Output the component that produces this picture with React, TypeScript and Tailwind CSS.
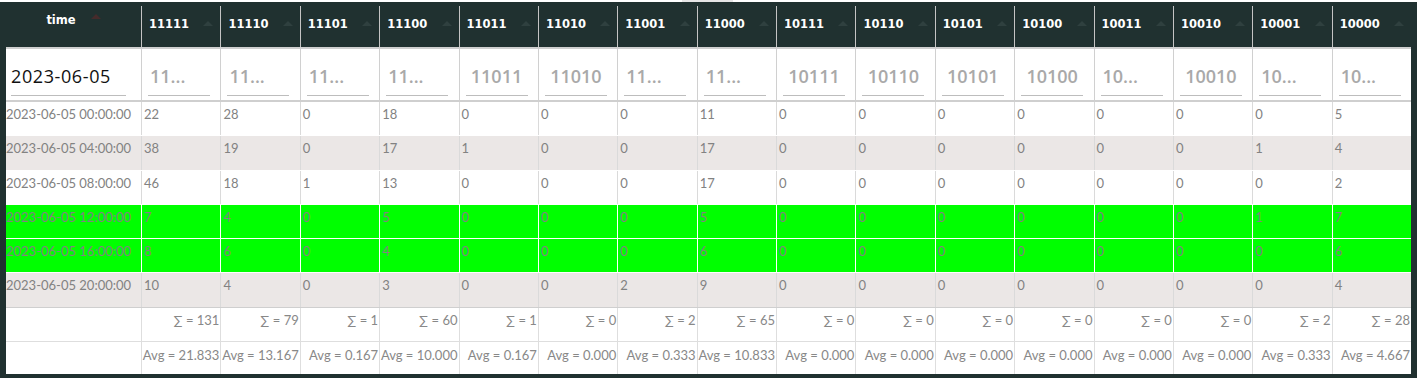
import React from 'react';

type Col = {
    name: string;
    placeholder: string;
    full: boolean;
    values: number[];
};

const cols: Col[] = [
    { name: '11111', placeholder: '11...', full: false, values: [22, 38, 46, 7, 8, 10] },
    { name: '11110', placeholder: '11...', full: false, values: [28, 19, 18, 4, 6, 4] },
    { name: '11101', placeholder: '11...', full: false, values: [0, 0, 1, 0, 0, 0] },
    { name: '11100', placeholder: '11...', full: false, values: [18, 17, 13, 5, 4, 3] },
    { name: '11011', placeholder: '11011', full: true, values: [0, 1, 0, 0, 0, 0] },
    { name: '11010', placeholder: '11010', full: true, values: [0, 0, 0, 0, 0, 0] },
    { name: '11001', placeholder: '11...', full: false, values: [0, 0, 0, 0, 0, 2] },
    { name: '11000', placeholder: '11...', full: false, values: [11, 17, 17, 5, 6, 9] },
    { name: '10111', placeholder: '10111', full: true, values: [0, 0, 0, 0, 0, 0] },
    { name: '10110', placeholder: '10110', full: true, values: [0, 0, 0, 0, 0, 0] },
    { name: '10101', placeholder: '10101', full: true, values: [0, 0, 0, 0, 0, 0] },
    { name: '10100', placeholder: '10100', full: true, values: [0, 0, 0, 0, 0, 0] },
    { name: '10011', placeholder: '10...', full: false, values: [0, 0, 0, 0, 0, 0] },
    { name: '10010', placeholder: '10010', full: true, values: [0, 0, 0, 0, 0, 0] },
    { name: '10001', placeholder: '10...', full: false, values: [0, 1, 0, 1, 0, 0] },
    { name: '10000', placeholder: '10...', full: false, values: [5, 4, 2, 7, 6, 4] },
];

const times = ['00:00:00', '04:00:00', '08:00:00', '12:00:00', '16:00:00', '20:00:00'];

// row styling: bg, border colour, height
const rowStyles = [
    { bg: 'bg-white', line: 'border-[#dadada]', h: 'h-[34px]', bottom: 'border-white' },
    { bg: 'bg-[#ebe7e6]', line: 'border-[#dadada]', h: 'h-[35px]', bottom: 'border-white' },
    { bg: 'bg-white', line: 'border-[#dadada]', h: 'h-[34px]', bottom: 'border-white' },
    { bg: 'bg-[#00ff00]', line: 'border-white', h: 'h-[34px]', bottom: 'border-white' },
    { bg: 'bg-[#00ff00]', line: 'border-white', h: 'h-[34px]', bottom: 'border-white' },
    { bg: 'bg-[#ebe7e6]', line: 'border-[#dadada]', h: 'h-[35px]', bottom: 'border-[#cfcfcf]' },
];

const gridCols = 'grid grid-cols-[135px_repeat(16,minmax(0,1fr))]';
const dataFont = "font-['Lato',sans-serif] text-[13px] leading-[16px]";

const SortArrow: React.FC<{ color: string }> = ({ color }) => (
    <svg width="10" height="5" viewBox="0 0 10 5" className="shrink-0">
        <polygon points="0,5 5,0 10,5" fill={color} />
    </svg>
);

export default function App() {
    return (
        <div className="w-[1417px] h-[378px] bg-white overflow-hidden">
            <div className="h-[2px] flex">
                <div className="ml-[682px] w-[51px] h-[2px] bg-[#e6e6e6]" />
            </div>
            <div className="h-[376px] bg-[#203130] px-[6px] pb-[4px]">
                {/* header */}
                <div className={`${gridCols} h-[47px] border-b-2 border-[#cfcfcf] font-['DejaVu_Sans',sans-serif] text-[11.5px] font-bold text-white`}>
                    <div className="flex justify-center items-start gap-[15px] pt-[11px] leading-[14px]">
                        <span>time</span>
                        <div className="mt-[1px]">
                            <SortArrow color="#452b2b" />
                        </div>
                    </div>
                    {cols.map((c) => (
                        <div key={c.name} className="mt-[4px] border-l border-[#c4c4c4] pt-[11px] px-[7px] flex justify-between items-start leading-[14px]">
                            <span>{c.name}</span>
                            <div className="mt-[4px]">
                                <SortArrow color="#2f403f" />
                            </div>
                        </div>
                    ))}
                </div>

                {/* filter row */}
                <div className={`${gridCols} h-[53px] border-b-2 border-[#cfcfcf] bg-white font-['Open_Sans',sans-serif] text-[18px] leading-[24px]`}>
                    <div className="pt-[15px] pl-[5px]">
                        <div className="w-[115px] h-[32px] border-b border-[#bdbdbd] text-[#111] tracking-[0.6px]">2023-06-05</div>
                    </div>
                    {cols.map((c) => (
                        <div key={c.name} className="border-l border-[#d0d0d0] pt-[15px] pl-[6px]">
                            <div className={`w-[62px] h-[32px] border-b border-[#bdbdbd] font-semibold text-[#a9a9a9] ${c.full ? 'text-center' : 'pl-[2px]'}`}>
                                {c.placeholder}
                            </div>
                        </div>
                    ))}
                </div>

                {/* data rows */}
                {times.map((t, r) => {
                    const s = rowStyles[r];
                    return (
                        <div key={t} className={`${gridCols} ${s.h} ${s.bg} border-b ${s.bottom} ${dataFont} text-[#828282]`}>
                            <div className="pt-[4px] whitespace-nowrap">2023-06-05 {t}</div>
                            {cols.map((c) => (
                                <div key={c.name} className={`border-l ${s.line} pt-[4px] pl-[2px]`}>
                                    {c.values[r]}
                                </div>
                            ))}
                        </div>
                    );
                })}

                {/* sum row */}
                <div className={`${gridCols} h-[34px] bg-white border-b border-[#dedede] ${dataFont} text-[#888]`}>
                    <div />
                    {cols.map((c) => {
                        const sum = c.values.reduce((a, b) => a + b, 0);
                        return (
                            <div key={c.name} className="border-l border-[#dedede] pt-[4px] pr-[1px] text-right whitespace-nowrap">
                                ∑ = {sum}
                            </div>
                        );
                    })}
                </div>

                {/* avg row */}
                <div className={`${gridCols} h-[32px] bg-white ${dataFont} text-[#888]`}>
                    <div />
                    {cols.map((c) => {
                        const avg = c.values.reduce((a, b) => a + b, 0) / c.values.length;
                        return (
                            <div key={c.name} className="border-l border-[#dedede] pt-[5px] pr-[1px] text-right whitespace-nowrap overflow-hidden">
                                Avg = {avg.toFixed(3)}
                            </div>
                        );
                    })}
                </div>
            </div>
        </div>
    );
}
